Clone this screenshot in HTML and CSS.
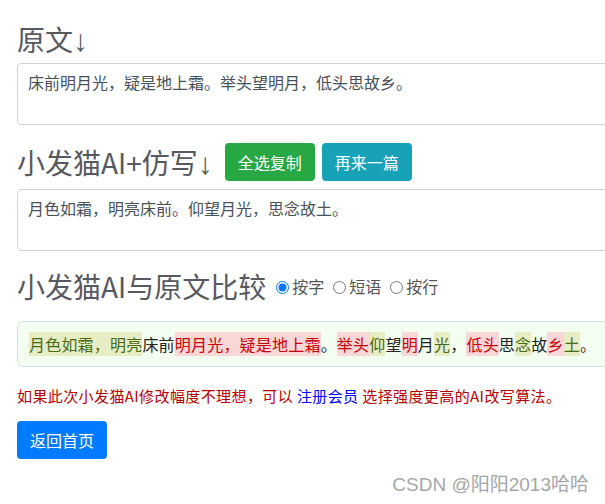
FILE: index.html
```html
<!DOCTYPE html>
<html lang="zh-CN">
<head>
    <meta charset="UTF-8">
    <meta name="viewport" content="width=device-width, initial-scale=1.0">
    <title>小发猫AI仿写</title>
    <link rel="stylesheet" href="styles.css">
</head>
<body>
    <div class="container">
        <h3 class="title first">原文<span class="arrow">↓</span></h3>
        <textarea class="text-box" id="source">床前明月光，疑是地上霜。举头望明月，低头思故乡。</textarea>

        <div class="title-row">
            <h3 class="title">小发猫AI+仿写<span class="arrow">↓</span></h3>
            <button class="btn btn-success">全选复制</button>
            <button class="btn btn-info">再来一篇</button>
        </div>
        <textarea class="text-box" id="result">月色如霜，明亮床前。仰望月光，思念故土。</textarea>

        <div class="title-row compare-row">
            <h3 class="title">小发猫AI与原文比较</h3>
            <label class="mode"><input type="radio" name="mode" checked>按字</label>
            <label class="mode"><input type="radio" name="mode">短语</label>
            <label class="mode"><input type="radio" name="mode">按行</label>
        </div>
        <div class="diff-box"><span class="add">月色如霜，明亮</span>床前<span class="del">明月光，疑是地上霜</span>。<span class="del">举头</span><span class="add">仰</span>望<span class="del">明</span>月<span class="add">光</span>，<span class="del">低头</span>思<span class="add">念</span>故<span class="del">乡</span><span class="add">土</span>。</div>

        <p class="tip">如果此次小发猫AI修改幅度不理想，可以 <a href="#">注册会员</a> 选择强度更高的AI改写算法。</p>

        <button class="btn btn-primary">返回首页</button>
    </div>
    <div class="watermark">CSDN @阳阳2013哈哈</div>
</body>
</html>
```
FILE: styles.css
```css
html, body {
    height: 100%;
}
body {
    margin: 0;
    padding: 0 17px;
    overflow: hidden;
    background: #fff;
    color: #333;
    font-family: "Noto Sans CJK SC", "Noto Sans", sans-serif;
    font-size: 16px;
    position: relative;
}
.container {
    width: 640px;
}
.title {
    font-size: 28px;
    font-weight: 400;
    line-height: 34px;
    color: #58585f;
    margin: 0;
}
.title .arrow {
    font-family: "Liberation Sans", sans-serif;
    font-size: 30px;
    line-height: 10px;
}
.title.first {
    margin-top: 22px;
    margin-bottom: 7px;
}
.text-box {
    display: block;
    box-sizing: border-box;
    width: 100%;
    height: 62px;
    padding: 6px 10px;
    border: 1px solid #ced4da;
    border-radius: 4px;
    font-family: inherit;
    font-size: 16px;
    line-height: 24px;
    color: #495057;
    resize: none;
}
.title-row {
    display: flex;
    align-items: center;
    margin: 18px 0 8px;
}
.title-row .title {
    margin-right: 12px;
}
.btn {
    border: 1px solid transparent;
    border-radius: 4px;
    padding: 6px 12px;
    font-family: inherit;
    font-size: 16px;
    line-height: 24px;
    color: #fff;
    cursor: pointer;
}
.btn-success {
    background-color: #28a745;
    margin-right: 7px;
}
.btn-info {
    background-color: #17a2b8;
}
.btn-primary {
    background-color: #007bff;
    margin-top: 14px;
}
.compare-row {
    margin: 18px 0 18px;
}
.compare-row .title {
    margin-right: 10px;
}
.mode {
    display: flex;
    align-items: center;
    font-size: 16px;
    color: #555;
    margin-right: 9px;
}
.mode input {
    width: 13px;
    height: 13px;
    margin: 3px 3px 0 0;
    accent-color: #0075ff;
}
.diff-box {
    box-sizing: border-box;
    width: 100%;
    padding: 10px 11px;
    border: 1px solid #d6dde6;
    border-radius: 6px;
    background: #f3fdf0;
    font-size: 16px;
    line-height: 24px;
    letter-spacing: 0.2px;
    color: #222;
    white-space: nowrap;
}
.add {
    background: #e6edc5;
    color: #4a6a14;
}
.del {
    background: #f8d7d7;
    color: #c8000a;
}
.tip {
    margin: 18px 0 0;
    font-size: 15px;
    line-height: 22px;
    letter-spacing: 0.4px;
    color: #b40000;
}
.tip a {
    color: #0000ff;
    text-decoration: none;
}
.watermark {
    position: absolute;
    right: 16px;
    bottom: 8px;
    font-family: "Liberation Sans", "Noto Sans CJK SC", sans-serif;
    font-size: 19px;
    color: #a6a6a6;
    text-shadow: 1px 1px 0 #fff;
}
```
